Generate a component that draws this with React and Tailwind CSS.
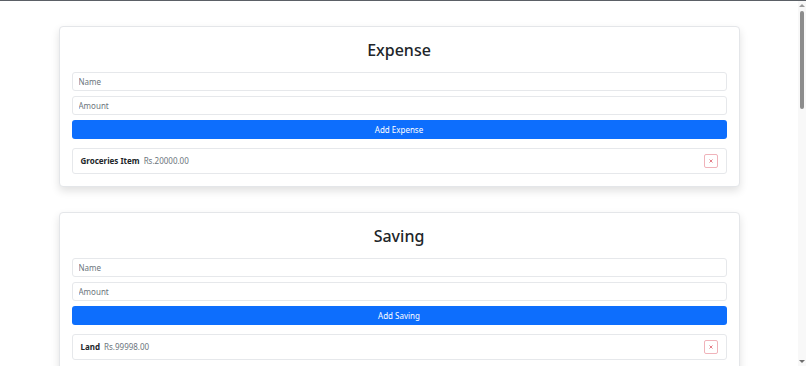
import React, { useState } from 'react';

const font = { fontFamily: '"Noto Sans", "Open Sans", sans-serif' };

const Section = ({ title, buttonLabel, items }) => {
    const [name, setName] = useState('');
    const [amount, setAmount] = useState('');

    return (
        <div className="bg-white border border-[#e4e6e9] rounded-[4px] shadow-[0_4px_8px_rgba(0,0,0,0.12)] px-[12px] pt-[12px] pb-[12px]">
            <h2 className="text-[16px] leading-[20px] font-medium text-[#212529] text-center pt-[1px] mb-[12px]">{title}</h2>
            <form className="flex flex-col gap-[5px]" onSubmit={(e) => e.preventDefault()}>
                <input
                    type="text"
                    placeholder="Name"
                    value={name}
                    onChange={(e) => setName(e.target.value)}
                    className="h-[19px] w-full border border-[#e6e8eb] rounded-[3px] px-[6px] text-[8px] text-[#212529] placeholder:text-[#6c757d] outline-none"
                />
                <input
                    type="text"
                    placeholder="Amount"
                    value={amount}
                    onChange={(e) => setAmount(e.target.value)}
                    className="h-[19px] w-full border border-[#e6e8eb] rounded-[3px] px-[6px] text-[8px] text-[#212529] placeholder:text-[#6c757d] outline-none"
                />
                <button type="submit" className="h-[19px] w-full bg-[#0d6efd] rounded-[3px] text-white text-[8px]">
                    {buttonLabel}
                </button>
            </form>
            <ul className="mt-[9px]">
                {items.map((item, index) => (
                    <li key={index} className="flex items-center justify-between border border-[#e6e8eb] rounded-[3px] h-[26px] pl-[8px] pr-[8px]">
                        <div className="text-[8px]">
                            <span className="font-bold text-[#212529]">{item.name}</span>
                            <span className="text-[#6c757d] ml-[4px]">Rs.{item.amount}</span>
                        </div>
                        <button className="w-[14px] h-[14px] border border-[#f0b3ba] rounded-[2px] flex items-center justify-center">
                            <svg width="4" height="4" viewBox="0 0 4 4" stroke="#e0707c" strokeWidth="0.9">
                                <path d="M0.5 0.5 L3.5 3.5 M3.5 0.5 L0.5 3.5" />
                            </svg>
                        </button>
                    </li>
                ))}
            </ul>
        </div>
    );
};

export default function App() {
    return (
        <div style={font} className="h-screen flex flex-col border-t border-[#5b6066] bg-white">
            <div className="flex-1 flex overflow-hidden">
                <div className="flex-1 pt-[25px]">
                    <div className="w-[681px] mx-auto flex flex-col gap-[25px]">
                        <Section title="Expense" buttonLabel="Add Expense" items={[{ name: 'Groceries Item', amount: '20000.00' }]} />
                        <Section title="Saving" buttonLabel="Add Saving" items={[{ name: 'Land', amount: '99998.00' }]} />
                    </div>
                </div>
                {/* scrollbar */}
                <div className="w-[8px] bg-[#f8f8f8] flex flex-col items-center">
                    <div className="mt-[3px] w-0 h-0 border-l-[3px] border-r-[3px] border-b-[3px] border-l-transparent border-r-transparent border-b-[#9a9a9a]" />
                    <div className="mt-[4px] w-[4px] h-[98px] rounded-full bg-[#8c8c8c]" />
                    <div className="flex-1" />
                    <div className="mb-[3px] w-0 h-0 border-l-[3px] border-r-[3px] border-t-[3px] border-l-transparent border-r-transparent border-t-[#6e6e6e]" />
                </div>
            </div>
        </div>
    );
}
